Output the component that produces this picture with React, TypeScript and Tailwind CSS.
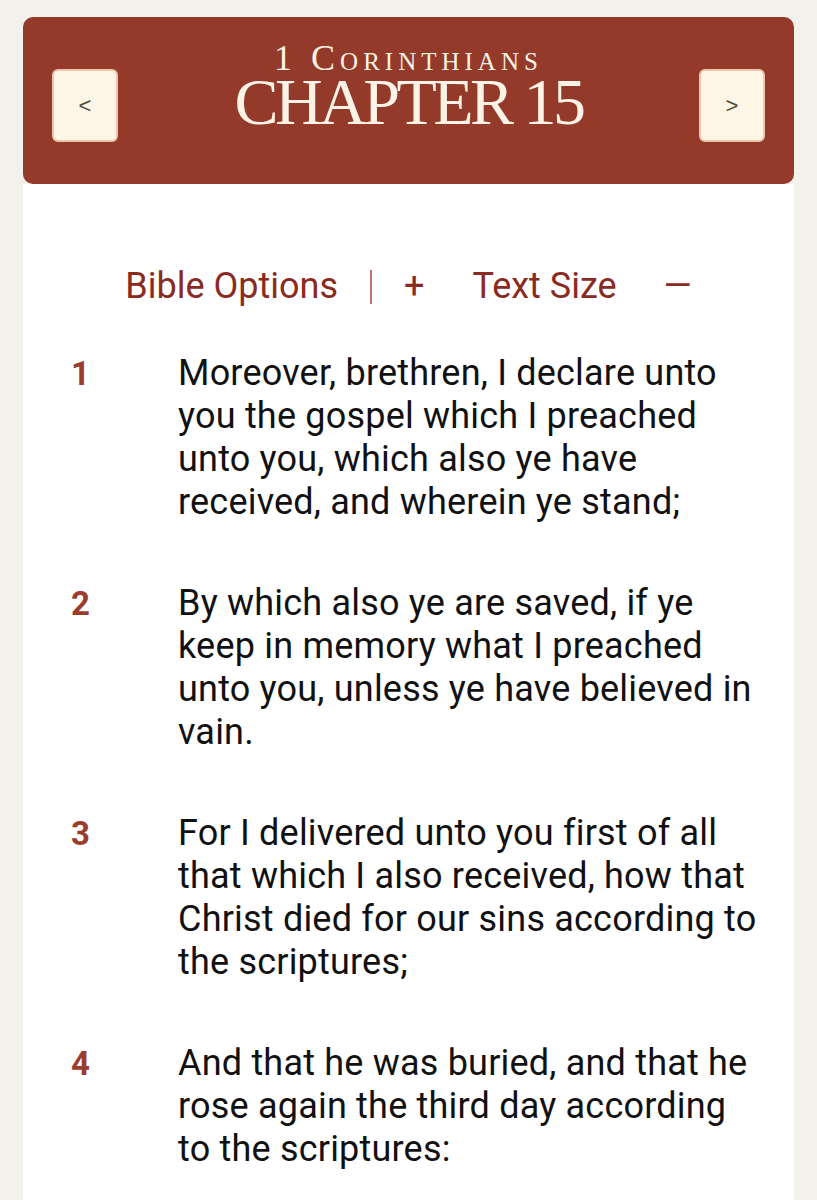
import React from "react";

const verses = [
  { n: 1, t: "Moreover, brethren, I declare unto you the gospel which I preached unto you, which also ye have received, and wherein ye stand;" },
  { n: 2, t: "By which also ye are saved, if ye keep in memory what I preached unto you, unless ye have believed in vain." },
  { n: 3, t: "For I delivered unto you first of all that which I also received, how that Christ died for our sins according to the scriptures;" },
  { n: 4, t: "And that he was buried, and that he rose again the third day according to the scriptures:" },
  { n: 5, t: "And that he was seen of Cephas, then of the twelve:" },
];

function NavButton({ label }: { label: string }) {
  return (
    <button className="mt-[52px] flex h-[73px] w-[66px] items-center justify-center rounded-[6px] border-2 border-[#f0c4ac] bg-[#fdf6e6] text-[22px] text-[#4b4b3e] [font-family:'Liberation_Sans',sans-serif]">
      {label}
    </button>
  );
}

export default function App() {
  return (
    <div className="min-h-[1200px] bg-[#f2f1ec] pt-[17px]">
      <div className="mx-[23px] w-[771px]">
        <div className="flex h-[167px] items-start justify-between rounded-[10px] bg-[#933a2a] px-[29px]">
          <NavButton label="<" />
          <div className="mt-[21px] flex flex-col items-center text-[#fbf3e6] [font-family:'Liberation_Serif',serif]">
            <div className="text-[36px] leading-[40px] tracking-[5px] [font-variant:small-caps]">1 Corinthians</div>
            <div className="text-[66px] leading-[48px] tracking-[-3.5px]">CHAPTER 15</div>
          </div>
          <NavButton label=">" />
        </div>
        <div className="bg-white pb-[40px] pt-[81px] [font-family:Roboto,sans-serif]">
          <div className="flex items-center justify-center text-[36px] leading-[43px] text-[#8a2b22]">
            <span>Bible Options</span>
            <span className="mx-[32px] h-[34px] w-[2px] bg-[#b9776c]"></span>
            <span>+</span>
            <span className="ml-[48px]">Text Size</span>
            <span className="ml-[47px]">—</span>
          </div>
          <div className="mt-[44px] flex flex-col gap-[58px]">
            {verses.map((v) => (
              <div key={v.n} className="flex items-baseline pl-[48px] leading-[43px]">
                <div className="w-[107px] shrink-0 text-[33px] font-bold text-[#9a3d2d]">{v.n}</div>
                <div className="w-[580px] text-[36px] tracking-[0.2px] text-[#111111]">{v.t}</div>
              </div>
            ))}
          </div>
        </div>
      </div>
    </div>
  );
}
